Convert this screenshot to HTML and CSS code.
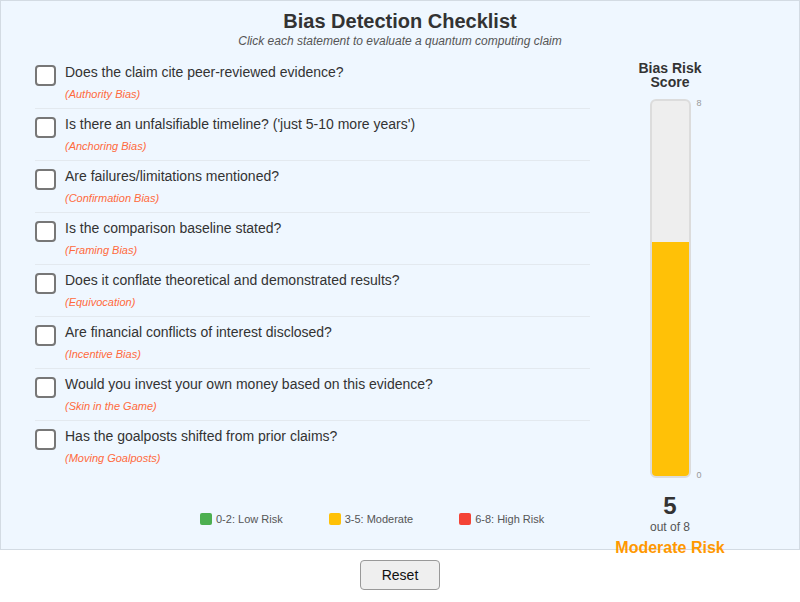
FILE: index.html
```html
<!DOCTYPE html>
<html lang="en">
<head>
  <meta charset="UTF-8">
  <title>Bias Detection Checklist</title>
  <link rel="stylesheet" href="styles.css">
</head>
<body>
  <div class="panel">
    <h1 class="title">Bias Detection Checklist</h1>
    <div class="subtitle">Click each statement to evaluate a quantum computing claim</div>

    <div class="main">
      <div class="checklist">
        <div class="item">
          <span class="box"></span>
          <div class="item-text">
            <div class="question">Does the claim cite peer-reviewed evidence?</div>
            <div class="bias">(Authority Bias)</div>
          </div>
        </div>
        <div class="item">
          <span class="box"></span>
          <div class="item-text">
            <div class="question">Is there an unfalsifiable timeline? ('just 5-10 more years')</div>
            <div class="bias">(Anchoring Bias)</div>
          </div>
        </div>
        <div class="item">
          <span class="box"></span>
          <div class="item-text">
            <div class="question">Are failures/limitations mentioned?</div>
            <div class="bias">(Confirmation Bias)</div>
          </div>
        </div>
        <div class="item">
          <span class="box"></span>
          <div class="item-text">
            <div class="question">Is the comparison baseline stated?</div>
            <div class="bias">(Framing Bias)</div>
          </div>
        </div>
        <div class="item">
          <span class="box"></span>
          <div class="item-text">
            <div class="question">Does it conflate theoretical and demonstrated results?</div>
            <div class="bias">(Equivocation)</div>
          </div>
        </div>
        <div class="item">
          <span class="box"></span>
          <div class="item-text">
            <div class="question">Are financial conflicts of interest disclosed?</div>
            <div class="bias">(Incentive Bias)</div>
          </div>
        </div>
        <div class="item">
          <span class="box"></span>
          <div class="item-text">
            <div class="question">Would you invest your own money based on this evidence?</div>
            <div class="bias">(Skin in the Game)</div>
          </div>
        </div>
        <div class="item last">
          <span class="box"></span>
          <div class="item-text">
            <div class="question">Has the goalposts shifted from prior claims?</div>
            <div class="bias">(Moving Goalposts)</div>
          </div>
        </div>

        <div class="legend">
          <span class="legend-item"><span class="swatch low"></span>0-2: Low Risk</span>
          <span class="legend-item"><span class="swatch mid"></span>3-5: Moderate</span>
          <span class="legend-item"><span class="swatch high"></span>6-8: High Risk</span>
        </div>
      </div>

      <div class="score-col">
        <div class="score-title">Bias Risk Score</div>
        <div class="gauge">
          <div class="gauge-fill" style="height: 62.5%"></div>
          <span class="tick tick-top">8</span>
          <span class="tick tick-bottom">0</span>
        </div>
        <div class="score-num">5</div>
        <div class="score-of">out of 8</div>
        <div class="score-level">Moderate Risk</div>
      </div>
    </div>
  </div>

  <div class="actions">
    <button class="reset">Reset</button>
  </div>
</body>
</html>
```

FILE: styles.css
```css
html, body {
  margin: 0;
  padding: 0;
  background: white;
  font-family: 'Liberation Sans', Arial, sans-serif;
}

.panel {
  box-sizing: border-box;
  width: 800px;
  height: 550px;
  background: #eff7ff;
  border: 1px solid #d3dbe3;
  padding: 8px 0 0 34px;
}

.title {
  margin: 0 0 0 -34px;
  text-align: center;
  font-size: 20px;
  line-height: 24px;
  font-weight: bold;
  color: #333;
}

.subtitle {
  margin: 1px 0 0 -34px;
  text-align: center;
  font-size: 12px;
  line-height: 15px;
  font-style: italic;
  color: #555;
}

.main {
  display: flex;
  margin-top: 8px;
}

.checklist {
  width: 555px;
}

.item {
  display: flex;
  padding: 6px 0 7px;
  border-bottom: 1px solid #e3e9ef;
  cursor: pointer;
}

.item.last {
  border-bottom-color: transparent;
}

.box {
  box-sizing: border-box;
  flex: none;
  width: 21px;
  height: 21px;
  margin-top: 2px;
  margin-right: 9px;
  border: 2px solid #777;
  border-radius: 4px;
  background: white;
}

.question {
  font-size: 14px;
  line-height: 18px;
  color: #333;
}

.bias {
  margin-top: 6px;
  font-size: 11px;
  line-height: 14px;
  font-style: italic;
  color: #ff6a3d;
}

.legend {
  display: flex;
  gap: 46px;
  margin-top: 39px;
  padding-left: 165px;
  font-size: 11px;
  line-height: 14px;
  color: #555;
}

.legend-item {
  display: flex;
  align-items: center;
}

.swatch {
  width: 12px;
  height: 12px;
  margin-right: 4px;
  border-radius: 2px;
}

.swatch.low { background: #4caf50; }
.swatch.mid { background: #ffc107; }
.swatch.high { background: #f44336; }

.score-col {
  display: flex;
  flex-direction: column;
  align-items: center;
  width: 80px;
  margin-left: 40px;
}

.score-title {
  margin-top: 4px;
  text-align: center;
  font-size: 14px;
  line-height: 14px;
  font-weight: bold;
  color: #333;
}

.gauge {
  position: relative;
  box-sizing: border-box;
  width: 41px;
  height: 379px;
  margin-top: 10px;
  border: 2px solid #dcdcdc;
  border-radius: 6px;
  background: #eee;
}

.gauge-fill {
  position: absolute;
  left: 0;
  right: 0;
  bottom: 0;
  background: #ffc107;
  border-radius: 0 0 4px 4px;
}

.tick {
  position: absolute;
  left: 45px;
  font-size: 9px;
  line-height: 10px;
  color: #999;
}

.tick-top { top: -3px; }
.tick-bottom { bottom: -4px; }

.score-num {
  margin-top: 14px;
  font-size: 24px;
  line-height: 28px;
  font-weight: bold;
  color: #333;
}

.score-of {
  font-size: 12px;
  line-height: 14px;
  color: #555;
}

.score-level {
  margin-top: 4px;
  font-size: 16px;
  line-height: 20px;
  font-weight: bold;
  color: #ff9800;
  white-space: nowrap;
}

.actions {
  display: flex;
  justify-content: center;
  padding-top: 10px;
}

.reset {
  width: 80px;
  height: 30px;
  font-family: 'Liberation Sans', Arial, sans-serif;
  font-size: 14px;
  color: #111;
  background: #efefef;
  border: 1px solid #999;
  border-radius: 4px;
  cursor: pointer;
}
```
